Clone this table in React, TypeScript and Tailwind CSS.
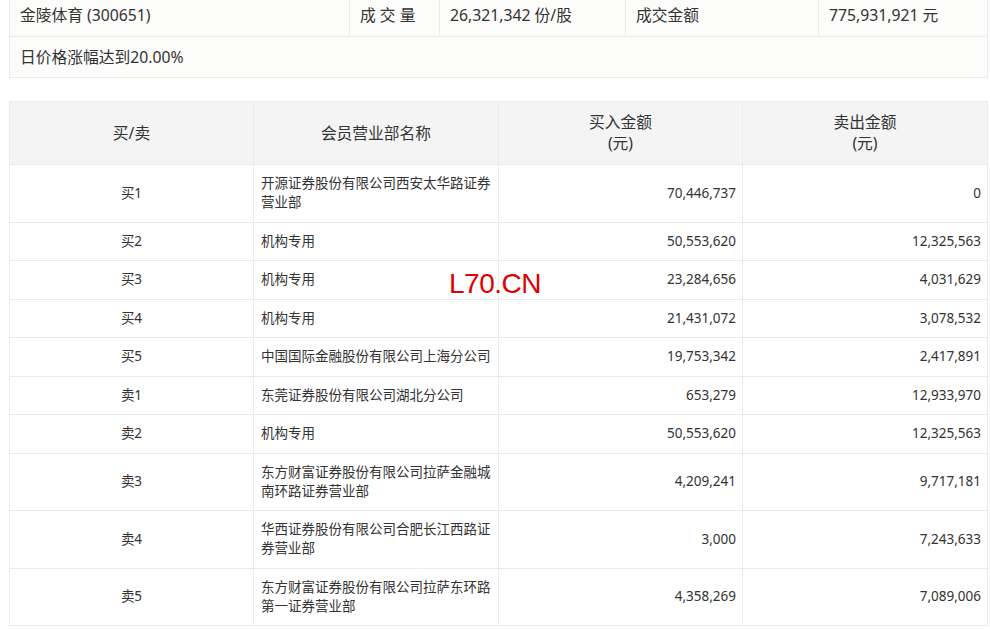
import React from "react";

const rows: { side: string; name: string; buy: string; sell: string }[] = [
  { side: "买1", name: "开源证券股份有限公司西安太华路证券营业部", buy: "70,446,737", sell: "0" },
  { side: "买2", name: "机构专用", buy: "50,553,620", sell: "12,325,563" },
  { side: "买3", name: "机构专用", buy: "23,284,656", sell: "4,031,629" },
  { side: "买4", name: "机构专用", buy: "21,431,072", sell: "3,078,532" },
  { side: "买5", name: "中国国际金融股份有限公司上海分公司", buy: "19,753,342", sell: "2,417,891" },
  { side: "卖1", name: "东莞证券股份有限公司湖北分公司", buy: "653,279", sell: "12,933,970" },
  { side: "卖2", name: "机构专用", buy: "50,553,620", sell: "12,325,563" },
  { side: "卖3", name: "东方财富证券股份有限公司拉萨金融城南环路证券营业部", buy: "4,209,241", sell: "9,717,181" },
  { side: "卖4", name: "华西证券股份有限公司合肥长江西路证券营业部", buy: "3,000", sell: "7,243,633" },
  { side: "卖5", name: "东方财富证券股份有限公司拉萨东环路第一证券营业部", buy: "4,358,269", sell: "7,089,006" },
];

export default function App() {
  return (
    <div
      className="relative w-[990px] h-[629px] overflow-hidden bg-white text-[#333]"
      style={{ fontFamily: '"Noto Sans", "Noto Sans CJK SC", sans-serif' }}
    >
      <div className="-mt-[5px] pl-[9px] pr-[3px]">
        <table className="w-[978px] table-fixed border-collapse bg-[#fcfcfb] text-[15.75px] leading-[21px]">
          <colgroup>
            <col className="w-[340px]" />
            <col className="w-[90px]" />
            <col className="w-[186px]" />
            <col className="w-[193px]" />
            <col className="w-[169px]" />
          </colgroup>
          <tbody>
            <tr className="h-[41px]">
              <td className="border border-[#ebebeb] px-[10px] pb-[1px] whitespace-nowrap">金陵体育 (300651)</td>
              <td className="border border-[#ebebeb] px-[10px] pb-[1px] whitespace-nowrap">成 交 量</td>
              <td className="border border-[#ebebeb] px-[10px] pb-[1px] whitespace-nowrap">26,321,342 份/股</td>
              <td className="border border-[#ebebeb] px-[10px] pb-[1px] whitespace-nowrap">成交金额</td>
              <td className="border border-[#ebebeb] px-[10px] pb-[1px] whitespace-nowrap">775,931,921 元</td>
            </tr>
            <tr className="h-[41px]">
              <td colSpan={5} className="border border-[#ebebeb] px-[10px]">日价格涨幅达到20.00%</td>
            </tr>
          </tbody>
        </table>

        <table className="mt-[23px] w-[978px] table-fixed border-collapse">
          <colgroup>
            <col className="w-[244px]" />
            <col className="w-[245px]" />
            <col className="w-[244px]" />
            <col className="w-[245px]" />
          </colgroup>
          <thead>
            <tr className="h-[63px] bg-[#f4f4f4] text-[15.75px] leading-[21px] font-normal">
              <th className="border border-[#ebebeb] font-normal text-center">买/卖</th>
              <th className="border border-[#ebebeb] font-normal text-center">会员营业部名称</th>
              <th className="border border-[#ebebeb] font-normal text-center">
                买入金额
                <br />
                (元)
              </th>
              <th className="border border-[#ebebeb] font-normal text-center">
                卖出金额
                <br />
                (元)
              </th>
            </tr>
          </thead>
          <tbody className="text-[13.5px] leading-[19px]">
            {rows.map((r, i) => (
              <tr key={i}>
                <td className="border border-[#ebebeb] py-[9.25px] text-center">{r.side}</td>
                <td className="border border-[#ebebeb] py-[9.25px] pl-[7px] pr-[6px] text-left">{r.name}</td>
                <td className="border border-[#ebebeb] py-[9.25px] pr-[6px] text-right">{r.buy}</td>
                <td className="border border-[#ebebeb] py-[9.25px] pr-[6px] text-right">{r.sell}</td>
              </tr>
            ))}
          </tbody>
        </table>
      </div>

      <div
        className="absolute left-[449px] top-[270px] text-[28px] leading-none tracking-[-0.5px] text-[#e00000]"
        style={{ fontFamily: '"Liberation Sans", Arial, sans-serif' }}
      >
        L70.CN
      </div>
    </div>
  );
}
